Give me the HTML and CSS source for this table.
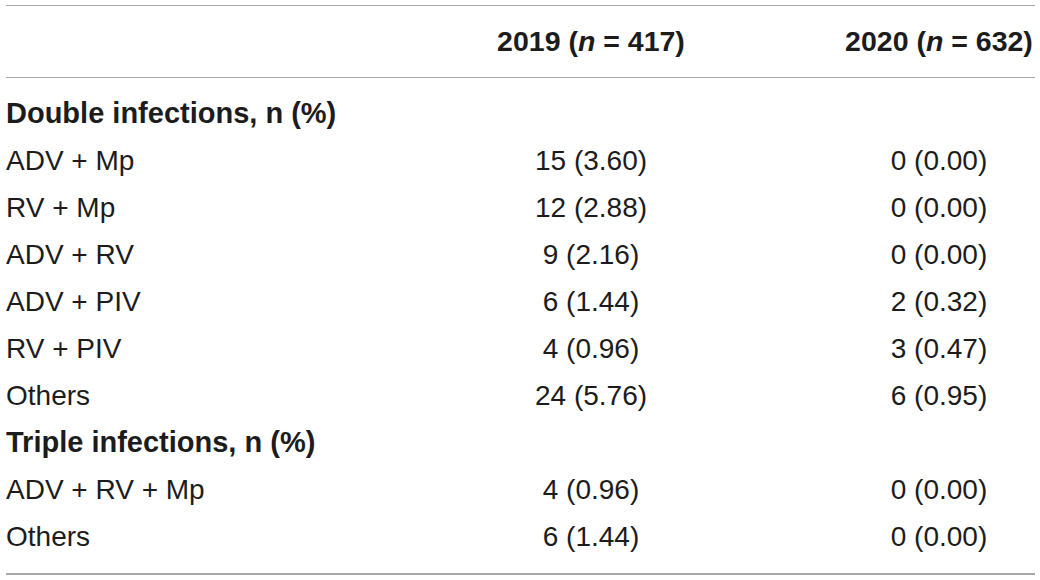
FILE: index.html
```html
<!DOCTYPE HTML>
<html lang="en-US">
<head>
<meta charset="UTF-8">
<title>Co-infections 2019 vs 2020</title>
<link rel="stylesheet" href="styles.css">
</head>
<body>
<div class="tbl">
	<div class="row head">
		<div class="lbl"></div>
		<div class="c">2019 (<i>n</i> = 417)</div>
		<div class="c">2020 (<i>n</i> = 632)</div>
	</div>
	<div class="body">
		<div class="row sec"><div class="lbl">Double infections, n (%)</div><div class="c"></div><div class="c"></div></div>
		<div class="row"><div class="lbl">ADV + Mp</div><div class="c">15 (3.60)</div><div class="c">0 (0.00)</div></div>
		<div class="row"><div class="lbl">RV + Mp</div><div class="c">12 (2.88)</div><div class="c">0 (0.00)</div></div>
		<div class="row"><div class="lbl">ADV + RV</div><div class="c">9 (2.16)</div><div class="c">0 (0.00)</div></div>
		<div class="row"><div class="lbl">ADV + PIV</div><div class="c">6 (1.44)</div><div class="c">2 (0.32)</div></div>
		<div class="row"><div class="lbl">RV + PIV</div><div class="c">4 (0.96)</div><div class="c">3 (0.47)</div></div>
		<div class="row"><div class="lbl">Others</div><div class="c">24 (5.76)</div><div class="c">6 (0.95)</div></div>
		<div class="row sec"><div class="lbl">Triple infections, n (%)</div><div class="c"></div><div class="c"></div></div>
		<div class="row"><div class="lbl">ADV + RV + Mp</div><div class="c">4 (0.96)</div><div class="c">0 (0.00)</div></div>
		<div class="row"><div class="lbl">Others</div><div class="c">6 (1.44)</div><div class="c">0 (0.00)</div></div>
	</div>
</div>
</body>
</html>
```

FILE: styles.css
```css
html, body, div { margin:0; padding:0; }
body { background:#fff; color:#1c1c1c; font:normal 28px "Liberation Sans", Arial, sans-serif; }
.tbl { width:1029px; margin:5px 0 0 6px; border-top:1px solid #a8a8a8; border-bottom:2px solid #a8a8a8; }
.row { display:grid; grid-template-columns:485px 200px 192px; column-gap:0; height:47px; align-items:center; }
.row .c:last-child { margin-left:152px; grid-column:3; width:192px; }
.row { grid-template-columns:485px 200px 344px; }
.head { height:71px; font-size:28.5px; font-weight:bold; border-bottom:1px solid #a8a8a8; }
.head i { font-style:italic; }
.body { padding:12px 0 13px; }
.lbl { white-space:nowrap; }
.c { text-align:center; white-space:nowrap; }
.sec { font-size:29px; font-weight:bold; }
```
